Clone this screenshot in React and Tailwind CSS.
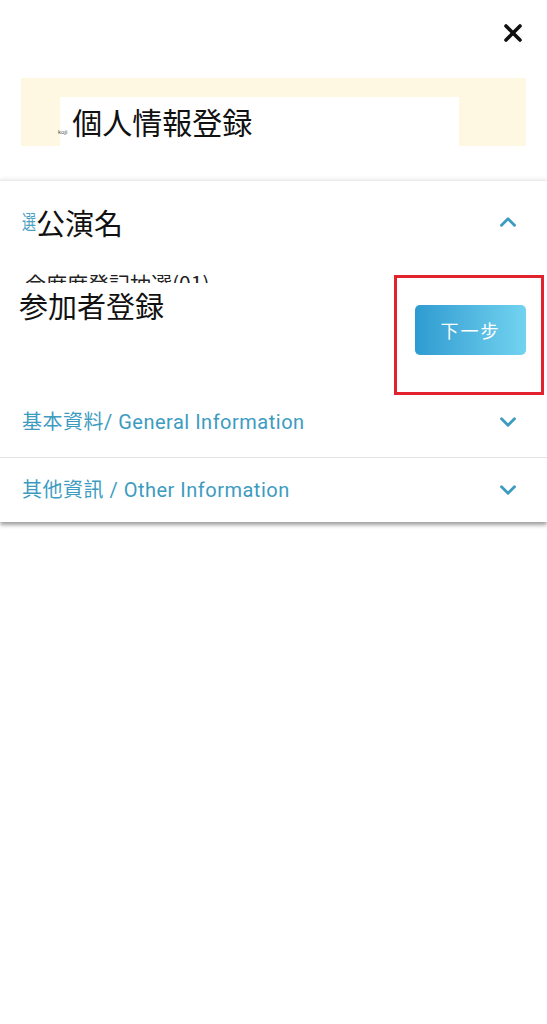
import React from 'react';
import { ChevronUp, ChevronDown } from 'lucide-react';

const font = { fontFamily: 'Roboto, "Noto Sans CJK TC", "Noto Sans CJK JP", sans-serif' };
const jp = { fontFamily: '"Noto Sans CJK JP", "Noto Sans CJK TC", sans-serif' };

const Section = ({ label, bordered }) => (
  <div className={`flex items-center justify-between pl-[22px] pr-[26px] ${bordered ? 'h-[70px]' : 'h-[65px] border-t border-[#e4e4e4]'}`}>
    <span className="text-[20px] tracking-[0.5px] text-[#3d9bbf]" style={font}>{label}</span>
    <ChevronDown size={26} strokeWidth={2.6} className="text-[#3d9bbf]" />
  </div>
);

export default function App() {
  return (
    <div className="min-h-screen w-full bg-white" style={font}>
      <header className="h-[180px]">
        <div className="flex justify-end pr-[25px] pt-[24px]">
          <svg width="18" height="18" viewBox="0 0 18 18">
            <path d="M2 2 L16 16 M16 2 L2 16" stroke="#111" strokeWidth="3.6" strokeLinecap="round" />
          </svg>
        </div>
        <div className="mx-[21px] mt-[36px] h-[68px] bg-[#fef8e2] pl-[39px] pt-[19px]">
          <div className="flex h-[49px] w-[399px] items-end bg-white pb-[6px]">
            <span className="-ml-[2px] mb-[5px] text-[6px] leading-none text-[#555]" style={font}>koji</span>
            <span className="ml-[5px] text-[30px] leading-[38px] text-[#111]" style={jp}>個人情報登録</span>
          </div>
        </div>
      </header>

      <div className="relative border-t border-[#ececec] bg-white shadow-[0_-2px_4px_rgba(0,0,0,0.05),0_3px_4px_rgba(0,0,0,0.38)]">
        <div className="flex h-[82px] items-center justify-between pl-[22px] pr-[26px]">
          <div className="flex items-center">
            <span className="inline-block w-[14px] origin-left scale-x-[0.7] text-[20px] leading-none text-[#4aa0c4]" style={jp}>選</span>
            <span className="text-[29px] leading-none text-[#111]" style={jp}>公演名</span>
          </div>
          <ChevronUp size={26} strokeWidth={2.6} className="text-[#3d9bbf]" />
        </div>

        <div className="mt-[9px] h-[11px] overflow-hidden pl-[25px]">
          <span className="block text-[21px] leading-[22px] text-[#222]" style={jp}>会席席登記抽選(01)</span>
        </div>

        <div className="flex items-start justify-between pl-[19px] pr-[21px]">
          <span className="mt-[4px] text-[29px] leading-[36px] text-[#111]" style={jp}>参加者登録</span>
          <button className="mt-[22px] flex h-[50px] w-[111px] items-center justify-center rounded-[5px] bg-gradient-to-r from-[#2d9bd0] to-[#72d3f0] text-[18px] tracking-[2px] text-white" style={jp}>
            下一步
          </button>
        </div>

        <div className="mt-[32px]">
          <Section label="基本資料/ General Information" bordered />
          <Section label="其他資訊 / Other Information" />
        </div>

        <div className="pointer-events-none absolute left-[394px] top-[94px] h-[120px] w-[150px] border-[3px] border-[#e2232d]" />
      </div>
    </div>
  );
}
